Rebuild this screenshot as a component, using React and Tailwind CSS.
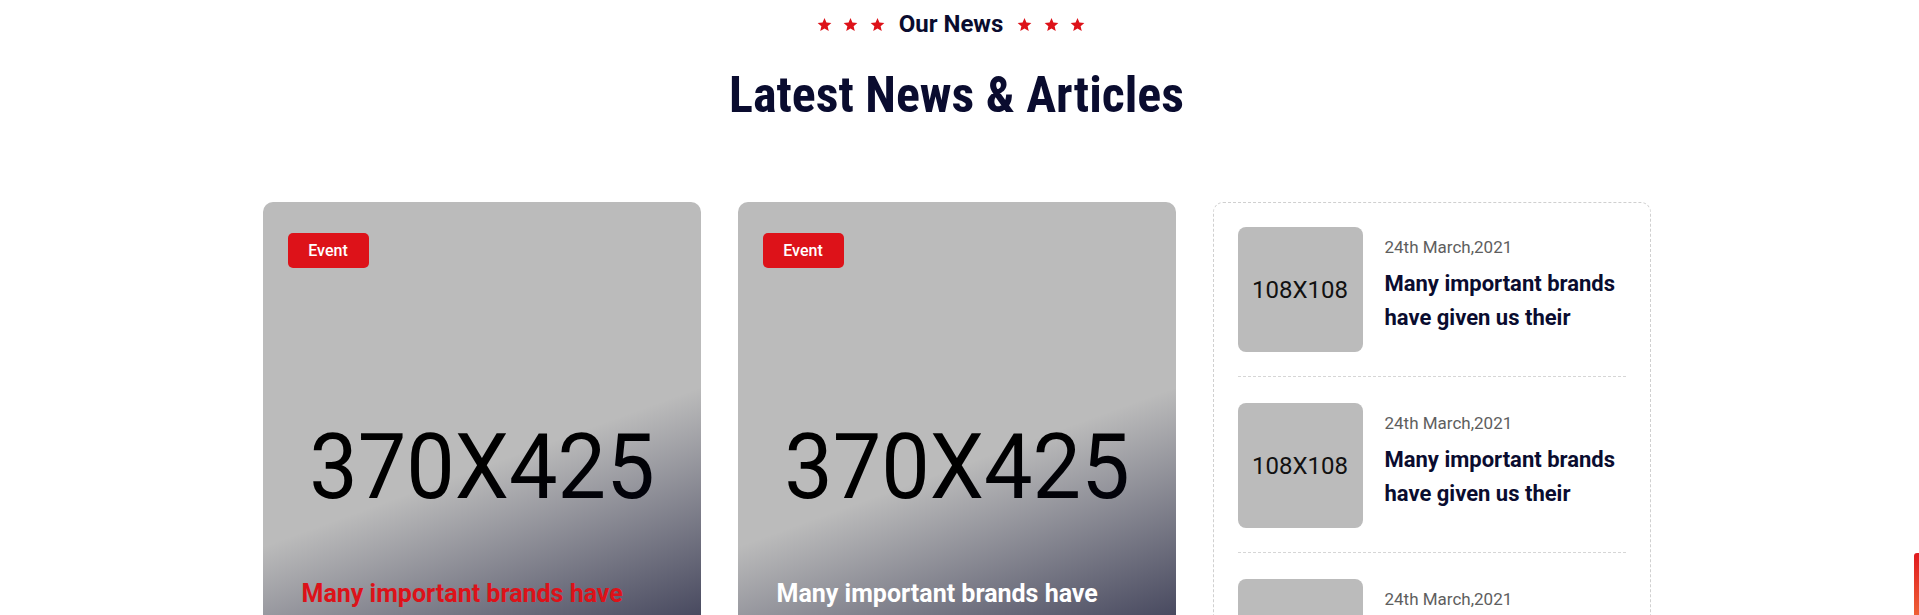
import React from "react";

const Star = () => (
  <svg width="15" height="15" viewBox="0 0 24 24" className="block">
    <path
      d="M12 1.5l3.09 7.26 7.86.7-5.96 5.2 1.78 7.7L12 18.3l-6.77 4.06 1.78-7.7-5.96-5.2 7.86-.7z"
      fill="#dd1219"
    />
  </svg>
);

const Stars = () => (
  <div className="flex items-center gap-[11.5px]">
    <Star />
    <Star />
    <Star />
  </div>
);

const BigCard = ({ titleClass }) => (
  <div className="relative h-[503px] rounded-[10px] overflow-hidden bg-[#bbbbbb]">
    <div className="absolute inset-0 flex justify-center pt-[218px]">
      <span className="block text-[90px] leading-[96px] text-black font-normal scale-x-[0.96] font-['Roboto',sans-serif]">
        370X425
      </span>
    </div>
    <div className="absolute inset-0 bg-[linear-gradient(160deg,transparent_52%,rgba(10,12,46,0.9)_100%)]" />
    <div className="absolute left-[25px] top-[31px] w-[81px] h-[35px] rounded-[5px] bg-[#dd1219] flex items-center justify-center text-white text-[16px] font-medium">
      Event
    </div>
    <h3
      className={`absolute left-[39px] top-[376px] text-[25px] leading-[32px] font-bold ${titleClass}`}
    >
      Many important brands have
    </h3>
  </div>
);

const SideItem = ({ first, last }) => (
  <div
    className={`flex gap-[22px] ${first ? "" : "pt-[26px]"} ${
      last ? "" : "pb-[24px] border-b border-dashed border-[#d6d6d6]"
    }`}
  >
    <div className="w-[125px] h-[125px] shrink-0 rounded-[8px] bg-[#bbbbbb] flex items-center justify-center text-[24px] text-[#111111]">
      108X108
    </div>
    <div className="flex-1 pt-[7px]">
      <div className="text-[17px] leading-[26px] text-[#5e5e5e]">
        24th March,2021
      </div>
      <h4 className="mt-[7px] text-[22px] leading-[34px] font-bold text-[#0a0c2f]">
        Many important brands have given us their
      </h4>
    </div>
  </div>
);

export default function App() {
  return (
    <div className="relative h-[615px] overflow-hidden bg-white font-['Roboto',sans-serif]">
      <div className="mx-auto w-[1394px] pr-[6px]">
        <div className="flex items-center justify-center pt-[8px] pr-[11px]">
          <Stars />
          <span className="mx-[14px] text-[24px] leading-[32px] font-bold text-[#0a0c2f]">
            Our News
          </span>
          <Stars />
        </div>
        <h2 className="mt-[25px] text-center text-[50px] leading-[60px] font-bold text-[#0a0c2f] font-['Roboto_Condensed','Roboto',sans-serif]">
          Latest News &amp; Articles
        </h2>
        <div className="mt-[77px] grid grid-cols-[438px_438px_438px] gap-[37px]">
          <BigCard titleClass="text-[#dd1219]" />
          <BigCard titleClass="text-white" />
          <div className="rounded-[10px] border border-dashed border-[#d0d0d0] px-[24px] pt-[24px] pb-[24px]">
            <SideItem first />
            <SideItem />
            <SideItem last />
          </div>
        </div>
      </div>
      <div className="absolute right-0 top-[553px] w-[5px] h-[80px] rounded-tl-[3px] bg-[linear-gradient(180deg,#e01a1f,#f2743c)]" />
    </div>
  );
}
